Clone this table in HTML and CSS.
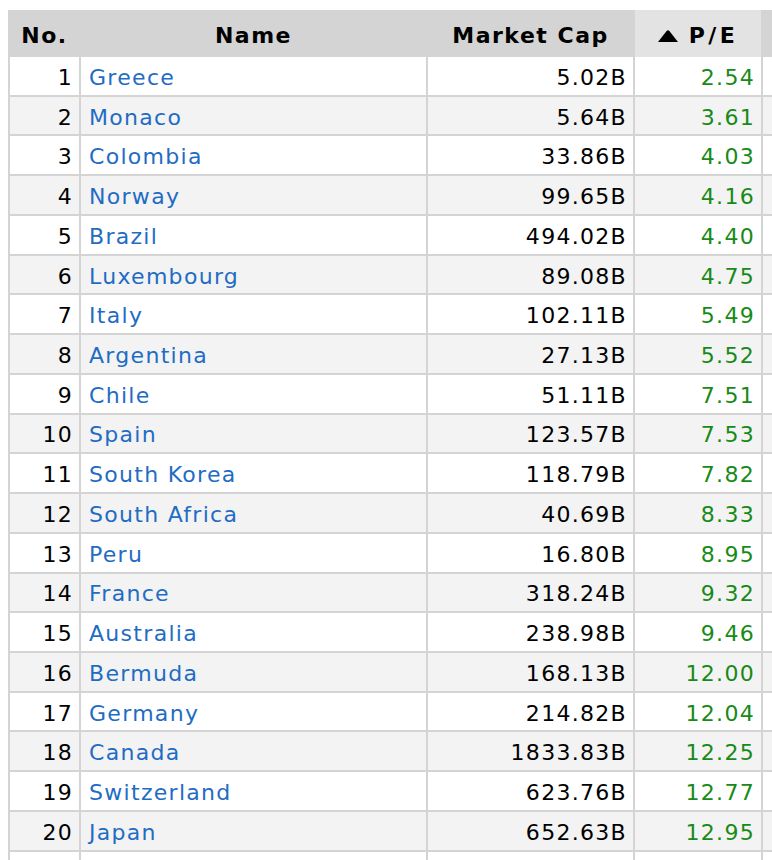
FILE: index.html
```html
<!DOCTYPE html>
<html>
<head>
<meta charset="utf-8">
<link rel="stylesheet" href="styles.css">
</head>
<body>
<table class="screener">
  <colgroup>
    <col class="c-no"><col class="c-name"><col class="c-cap"><col class="c-pe"><col class="c-extra">
  </colgroup>
  <thead>
    <tr>
      <th class="first">No.</th>
      <th>Name</th>
      <th>Market Cap</th>
      <th class="sorted"><svg class="tri" width="20" height="12" viewBox="0 0 20 12"><path d="M0 12 L8.6 1 Q10 -0.4 11.4 1 L20 12 Z" fill="#000"/></svg><span class="pe">P/E</span></th>
      <th></th>
    </tr>
  </thead>
  <tbody>
    <tr><td class="first num">1</td><td><a href="#">Greece</a></td><td class="num">5.02B</td><td class="num pos">2.54</td><td></td></tr>
    <tr><td class="first num">2</td><td><a href="#">Monaco</a></td><td class="num">5.64B</td><td class="num pos">3.61</td><td></td></tr>
    <tr><td class="first num">3</td><td><a href="#">Colombia</a></td><td class="num">33.86B</td><td class="num pos">4.03</td><td></td></tr>
    <tr><td class="first num">4</td><td><a href="#">Norway</a></td><td class="num">99.65B</td><td class="num pos">4.16</td><td></td></tr>
    <tr><td class="first num">5</td><td><a href="#">Brazil</a></td><td class="num">494.02B</td><td class="num pos">4.40</td><td></td></tr>
    <tr><td class="first num">6</td><td><a href="#">Luxembourg</a></td><td class="num">89.08B</td><td class="num pos">4.75</td><td></td></tr>
    <tr><td class="first num">7</td><td><a href="#">Italy</a></td><td class="num">102.11B</td><td class="num pos">5.49</td><td></td></tr>
    <tr><td class="first num">8</td><td><a href="#">Argentina</a></td><td class="num">27.13B</td><td class="num pos">5.52</td><td></td></tr>
    <tr><td class="first num">9</td><td><a href="#">Chile</a></td><td class="num">51.11B</td><td class="num pos">7.51</td><td></td></tr>
    <tr><td class="first num">10</td><td><a href="#">Spain</a></td><td class="num">123.57B</td><td class="num pos">7.53</td><td></td></tr>
    <tr><td class="first num">11</td><td><a href="#">South Korea</a></td><td class="num">118.79B</td><td class="num pos">7.82</td><td></td></tr>
    <tr><td class="first num">12</td><td><a href="#">South Africa</a></td><td class="num">40.69B</td><td class="num pos">8.33</td><td></td></tr>
    <tr><td class="first num">13</td><td><a href="#">Peru</a></td><td class="num">16.80B</td><td class="num pos">8.95</td><td></td></tr>
    <tr><td class="first num">14</td><td><a href="#">France</a></td><td class="num">318.24B</td><td class="num pos">9.32</td><td></td></tr>
    <tr><td class="first num">15</td><td><a href="#">Australia</a></td><td class="num">238.98B</td><td class="num pos">9.46</td><td></td></tr>
    <tr><td class="first num">16</td><td><a href="#">Bermuda</a></td><td class="num">168.13B</td><td class="num pos">12.00</td><td></td></tr>
    <tr><td class="first num">17</td><td><a href="#">Germany</a></td><td class="num">214.82B</td><td class="num pos">12.04</td><td></td></tr>
    <tr><td class="first num">18</td><td><a href="#">Canada</a></td><td class="num">1833.83B</td><td class="num pos">12.25</td><td></td></tr>
    <tr><td class="first num">19</td><td><a href="#">Switzerland</a></td><td class="num">623.76B</td><td class="num pos">12.77</td><td></td></tr>
    <tr><td class="first num">20</td><td><a href="#">Japan</a></td><td class="num">652.63B</td><td class="num pos">12.95</td><td></td></tr>
    <tr><td class="first num"></td><td></td><td class="num"></td><td class="num pos"></td><td></td></tr>
  </tbody>
</table>
</body>
</html>
```

FILE: styles.css
```css
html, body {
  overflow: hidden;
}
body {
  margin: 10px 0 0 8px;
  background: #fff;
  font-family: "DejaVu Sans", Verdana, sans-serif;
  font-size: 22px;
  letter-spacing: 1.3px;
  color: #000;
}
.screener {
  border-collapse: separate;
  border-spacing: 0;
  table-layout: fixed;
  width: 905px;
}
.c-no { width: 73px; }
.c-name { width: 347px; }
.c-cap { width: 207px; }
.c-pe { width: 128px; }
.c-extra { width: 150px; }

.screener th,
.screener td {
  box-sizing: border-box;
  border-right: 2px solid #d4d4d4;
  white-space: nowrap;
  overflow: hidden;
}
.screener th.first,
.screener td.first {
  border-left: 2px solid #d4d4d4;
}
.screener th {
  height: 47px;
  padding: 4px 4px 0;
  background: #d4d4d4;
  font-weight: bold;
  letter-spacing: 1.5px;
  text-align: center;
  vertical-align: middle;
}
.screener th.sorted {
  background: #e3e3e3;
}
.tri {
  display: inline-block;
  vertical-align: 0;
  margin-right: 11px;
  position: relative;
  top: -1px;
}
.pe {
  letter-spacing: 3.5px;
}
.screener td {
  height: 39.74px;
  padding: 3px 6px 0 8px;
  border-bottom: 2px solid #d4d4d4;
  vertical-align: middle;
}
.screener tbody tr:nth-child(even) td {
  background: #f3f3f3;
}
.screener td.num {
  text-align: right;
}
.screener td.pos {
  color: #178a17;
}
.screener a {
  color: #1f6cc4;
  text-decoration: none;
}
```
